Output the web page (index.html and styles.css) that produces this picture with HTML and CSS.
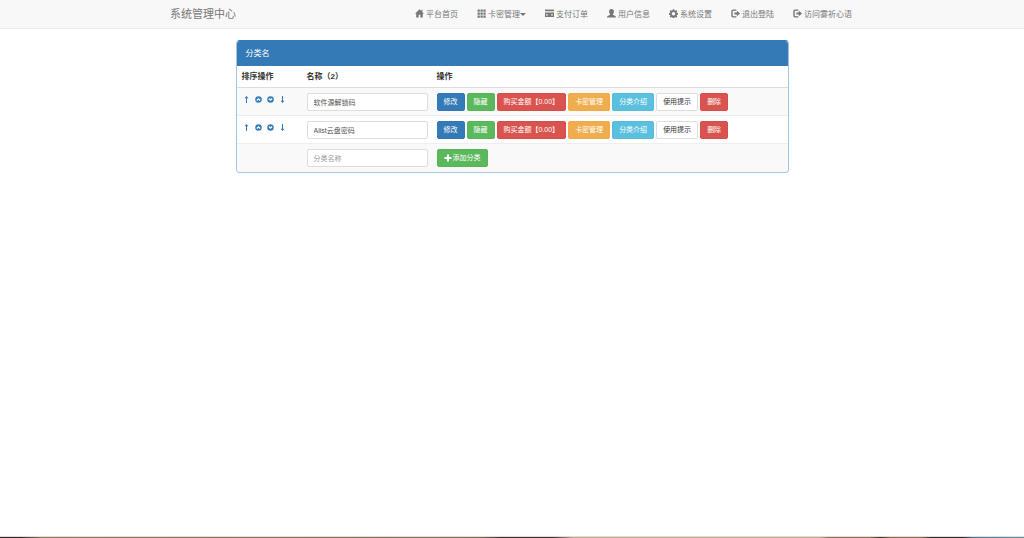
FILE: index.html
```html
<!DOCTYPE html>
<html lang="zh-CN">
<head>
  <meta charset="UTF-8">
  <meta name="viewport" content="width=device-width, initial-scale=1.0">
  <title>系统管理中心</title>
  <link rel="stylesheet" href="styles.css">
</head>
<body>

<!-- Icon set -->
<svg class="icon-defs" aria-hidden="true">
  <symbol id="i-home" viewBox="0 0 16 16"><path d="M8 0.5L0 8.5h2.2V15h4.3v-5h3v5h4.3V8.5H16l-2.8-2.8V1.5h-2v2.2z"/></symbol>
  <symbol id="i-th" viewBox="0 0 16 16"><path d="M1 1h4v4H1zM6.2 1h4v4h-4zM11.4 1h4v4h-4zM1 6.2h4v4H1zM6.2 6.2h4v4h-4zM11.4 6.2h4v4h-4zM1 11.4h4v4H1zM6.2 11.4h4v4h-4zM11.4 11.4h4v4h-4z"/></symbol>
  <symbol id="i-card" viewBox="0 0 16 16"><path d="M0 1h16v3H0z"/><path fill-rule="evenodd" d="M0 6h16v8H0zM2 9.500v2h3v-2zM11 9.500v2h3v-2z"/></symbol>
  <symbol id="i-user" viewBox="0 0 16 16"><path d="M8 0c2.800 0 4.300 1.800 4.300 4.500 0 1.900-.8 3.700-1.900 4.700v1.200c2 1 5.600 1.700 5.600 4.600H0c0-2.900 3.600-3.600 5.600-4.600V9.200C4.500 8.200 3.700 6.400 3.700 4.500 3.700 1.800 5.200 0 8 0z"/></symbol>
  <symbol id="i-cog" viewBox="0 0 16 16"><path fill-rule="evenodd" d="M6.600.5h2.800l.4 2 1.300.6 1.700-1.200 2 2-1.200 1.700.6 1.300 2 .4v2.800l-2 .4-.6 1.300 1.200 1.700-2 2-1.700-1.200-1.300.6-.4 2H6.600l-.4-2-1.300-.6-1.700 1.200-2-2 1.200-1.700-.6-1.300-2-.4V7.300l2-.4.6-1.300-1.200-1.700 2-2 1.700 1.200 1.300-.6zM8 5.200a3.200 3.200 0 1 0 0 6.400 3.200 3.200 0 0 0 0-6.400z"/></symbol>
  <symbol id="i-out" viewBox="0 0 16 16"><path d="M9.500 1H3.500A3 3 0 0 0 .5 4v8a3 3 0 0 0 3 3h6v-2.200h-5A1.500 1.500 0 0 1 3 11.300V4.700a1.500 1.500 0 0 1 1.500-1.500h5z"/><path d="M10.500 3.300L16 8l-5.500 4.700V9.600H6V6.400h4.500z"/></symbol>
  <symbol id="i-plus" viewBox="0 0 16 16"><path d="M6 1h4v5h5v4h-5v5H6v-5H1V6h5z"/></symbol>
  <symbol id="i-top" viewBox="0 0 16 16"><path d="M8 0l4.500 5H9.200v11H6.800V5H3.500z"/></symbol>
  <symbol id="i-bottom" viewBox="0 0 16 16"><path d="M8 16l4.500-5H9.200V0H6.800v11H3.500z"/></symbol>
  <symbol id="i-up" viewBox="0 0 16 16"><path fill-rule="evenodd" d="M8 .5a7.500 7.500 0 1 1 0 15 7.500 7.500 0 0 1 0-15zM8 4.500L3.200 9.300l2 2L8 8.500l2.800 2.800 2-2z"/></symbol>
  <symbol id="i-down" viewBox="0 0 16 16"><path fill-rule="evenodd" d="M8 .5a7.500 7.500 0 1 1 0 15 7.500 7.500 0 0 1 0-15zM8 11.500l4.800-4.800-2-2L8 7.500 5.200 4.700l-2 2z"/></symbol>
</svg>

<nav class="navbar">
  <div class="container">
    <a class="navbar-brand" href="#">系统管理中心</a>
    <ul class="nav">
      <li><a href="#"><svg class="icon"><use href="#i-home"/></svg>平台首页</a></li>
      <li><a href="#"><svg class="icon"><use href="#i-th"/></svg>卡密管理<span class="caret"></span></a></li>
      <li><a href="#"><svg class="icon"><use href="#i-card"/></svg>支付订单</a></li>
      <li><a href="#"><svg class="icon"><use href="#i-user"/></svg>用户信息</a></li>
      <li><a href="#"><svg class="icon"><use href="#i-cog"/></svg>系统设置</a></li>
      <li><a href="#"><svg class="icon"><use href="#i-out"/></svg>退出登陆</a></li>
      <li><a href="#"><svg class="icon"><use href="#i-out"/></svg>访问雾祈心语</a></li>
    </ul>
  </div>
</nav>

<main class="panel">
  <div class="panel-heading">分类名</div>
  <table class="table">
    <thead>
      <tr>
        <th class="col-sort">排序操作</th>
        <th class="col-name">名称（2）</th>
        <th>操作</th>
      </tr>
    </thead>
    <tbody>
      <tr>
        <td>
          <div class="sort">
            <a href="#" aria-label="移到顶部"><svg class="icon-sort"><use href="#i-top"/></svg></a>
            <a href="#" aria-label="上移"><svg class="icon-sort"><use href="#i-up"/></svg></a>
            <a href="#" aria-label="下移"><svg class="icon-sort"><use href="#i-down"/></svg></a>
            <a href="#" aria-label="移到底部"><svg class="icon-sort"><use href="#i-bottom"/></svg></a>
          </div>
        </td>
        <td><input type="text" class="form-control" aria-label="名称" value="软件源解锁码"></td>
        <td>
          <div class="buttons">
            <button type="button" class="btn btn-primary">修改</button>
            <button type="button" class="btn btn-success">隐藏</button>
            <button type="button" class="btn btn-danger">购买金额【0.00】</button>
            <button type="button" class="btn btn-warning">卡密管理</button>
            <button type="button" class="btn btn-info">分类介绍</button>
            <button type="button" class="btn btn-default">使用提示</button>
            <button type="button" class="btn btn-danger">删除</button>
          </div>
        </td>
      </tr>
      <tr>
        <td>
          <div class="sort">
            <a href="#" aria-label="移到顶部"><svg class="icon-sort"><use href="#i-top"/></svg></a>
            <a href="#" aria-label="上移"><svg class="icon-sort"><use href="#i-up"/></svg></a>
            <a href="#" aria-label="下移"><svg class="icon-sort"><use href="#i-down"/></svg></a>
            <a href="#" aria-label="移到底部"><svg class="icon-sort"><use href="#i-bottom"/></svg></a>
          </div>
        </td>
        <td><input type="text" class="form-control" aria-label="名称" value="Alist云盘密码"></td>
        <td>
          <div class="buttons">
            <button type="button" class="btn btn-primary">修改</button>
            <button type="button" class="btn btn-success">隐藏</button>
            <button type="button" class="btn btn-danger">购买金额【0.00】</button>
            <button type="button" class="btn btn-warning">卡密管理</button>
            <button type="button" class="btn btn-info">分类介绍</button>
            <button type="button" class="btn btn-default">使用提示</button>
            <button type="button" class="btn btn-danger">删除</button>
          </div>
        </td>
      </tr>
      <tr>
        <td></td>
        <td><input type="text" class="form-control" aria-label="分类名称" placeholder="分类名称"></td>
        <td>
          <div class="buttons">
            <button type="button" class="btn btn-success"><svg class="icon-btn"><use href="#i-plus"/></svg>添加分类</button>
          </div>
        </td>
      </tr>
    </tbody>
  </table>
</main>

<div class="bottom-strip"></div>

</body>
</html>
```
FILE: styles.css
```css
* {
  box-sizing: border-box;
}
body {
  display: flex;
  flex-direction: column;
  min-height: 100vh;
  margin: 0;
  background-color: #fff;
  color: #333;
  font-family: "Liberation Sans", "Noto Sans CJK SC", sans-serif;
  font-size: 8px;
  line-height: 13px;
}
a {
  color: #337ab7;
  text-decoration: none;
}
.icon-defs {
  position: absolute;
  width: 0;
  height: 0;
}
svg {
  display: block;
  fill: currentColor;
}

/* Navbar */
.navbar {
  background-color: #f8f8f8;
  border-bottom: 1px solid #ececec;
}
.container {
  display: flex;
  justify-content: space-between;
  align-items: center;
  width: 100%;
  max-width: 702px;
  height: 28px;
  margin: 0 auto;
  padding: 0 11px 0 9px;
}
.navbar-brand {
  color: #777;
  font-size: 11px;
}
.nav {
  display: flex;
  gap: 19px;
  margin: 0;
  padding: 0;
  list-style: none;
}
.nav a {
  display: flex;
  align-items: center;
  color: #777;
}
.icon {
  width: 9px;
  height: 9px;
  margin: 0 2px 2px 0;
}
.caret {
  border-top: 3px solid #777;
  border-left: 3px solid transparent;
  border-right: 3px solid transparent;
}

/* Category panel */
.panel {
  width: 100%;
  max-width: 553px;
  margin: 11px auto;
  border: 1px solid #a3c4de;
  border-top-color: #337ab7;
  border-radius: 4px;
  overflow: hidden;
}
.panel-heading {
  padding: 6px 9px;
  background-color: #337ab7;
  color: #fff;
}
.table {
  width: 100%;
  table-layout: fixed;
  border-collapse: separate;
  border-spacing: 0;
}
.col-sort { width: 65px; }
.col-name { width: 130px; }
th {
  height: 22px;
  padding: 0 4px 0 5px;
  border-bottom: 1px solid #ddd;
  text-align: left;
}
td {
  height: 28px;
  padding: 5px 4px 4px 5px;
  border-bottom: 1px solid #eee;
  vertical-align: top;
}
tbody tr:nth-child(odd) {
  background-color: #f9f9f9;
}
tbody tr:last-child td {
  border-bottom: none;
}
.sort {
  display: flex;
  gap: 5px;
  padding: 3px 0 0 1px;
}
.icon-sort {
  width: 7px;
  height: 7px;
}
.form-control {
  display: block;
  width: 100%;
  height: 18px;
  padding: 0 6px;
  border: 1px solid #ddd;
  border-radius: 2px;
  background-color: #fff;
  color: #555;
  font: inherit;
  font-size: 7px;
}
.form-control::placeholder {
  color: #999;
}
.buttons {
  display: flex;
  gap: 2px;
}
.btn {
  display: flex;
  align-items: center;
  height: 18px;
  padding: 0 6px;
  border: 1px solid transparent;
  border-radius: 2px;
  color: #fff;
  font: inherit;
  font-size: 7px;
  line-height: 12px;
  white-space: nowrap;
  cursor: pointer;
}
.btn-primary { background-color: #337ab7; border-color: #3277b3; }
.btn-success { background-color: #5cb85c; border-color: #57b557; }
.btn-danger { background-color: #d9534f; border-color: #d74d48; }
.btn-warning { background-color: #f0ad4e; border-color: #efa945; }
.btn-info { background-color: #5bc0de; border-color: #54bddd; }
.btn-default { background-color: #fff; border-color: #ddd; color: #333; }
.icon-btn {
  width: 8px;
  height: 8px;
  margin-right: 1px;
}

/* Thin coloured edge along the bottom of the page */
.bottom-strip {
  height: 2px;
  margin-top: auto;
  border-top: 1px solid #eadccf;
  background: linear-gradient(90deg, #2a2030 0, #2a2030 2%, #8a7a68 4%, #7a6c5c 47%, #3a2a35 49%, #3a2a35 54%, #b8a890 56%, #b8a890 80%, #8a6a58 81%, #8a6a58 85%, #2c3228 86%, #8a6a58 87%, #8a6a58 90%, #222838 91%, #222838 94%, #3f7ca5 95%, #5a94b8 100%) padding-box;
}
```
